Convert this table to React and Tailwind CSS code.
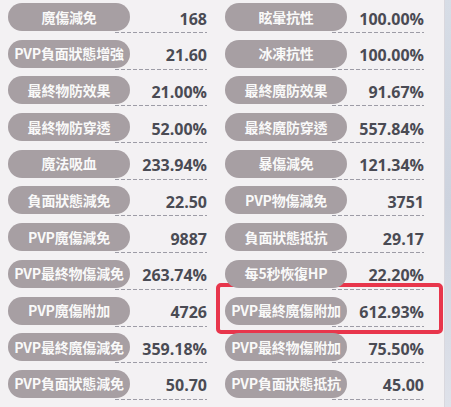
const rows = [
  ["魔傷減免", "168", "眩暈抗性", "100.00%"],
  ["PVP負面狀態增強", "21.60", "冰凍抗性", "100.00%"],
  ["最終物防效果", "21.00%", "最終魔防效果", "91.67%"],
  ["最終物防穿透", "52.00%", "最終魔防穿透", "557.84%"],
  ["魔法吸血", "233.94%", "暴傷減免", "121.34%"],
  ["負面狀態減免", "22.50", "PVP物傷減免", "3751"],
  ["PVP魔傷減免", "9887", "負面狀態抵抗", "29.17"],
  ["PVP最終物傷減免", "263.74%", "每5秒恢復HP", "22.20%"],
  ["PVP魔傷附加", "4726", "PVP最終魔傷附加", "612.93%"],
  ["PVP最終魔傷減免", "359.18%", "PVP最終物傷附加", "75.50%"],
  ["PVP負面狀態減免", "50.70", "PVP負面狀態抵抗", "45.00"],
];

const StatCell = ({ label, value, highlight }) => {
  return (
    <div className="relative h-[36.7px] pl-[8px] flex items-start">
      {highlight && (
        <div className="absolute left-[-1px] right-[1px] top-[-14px] bottom-[-1px] border-[4px] border-[#e8364c] rounded-[5px]" />
      )}
      <div className="relative z-10 w-[122px] h-[28px] rounded-full bg-[#a79fa3] flex items-center justify-center text-[14px] font-bold text-white/95 tracking-[-0.2px] whitespace-nowrap">
        {label}
      </div>
      <div className="ml-[-15px] w-[92px] h-[30px] flex flex-col">
        <div className="flex-1 flex items-center justify-end pt-[2px] text-[16px] font-bold text-[#4a4b54] font-['Open_Sans',sans-serif]">
          {value}
        </div>
        <div className="h-[1px] bg-[repeating-linear-gradient(90deg,#9d9ca6_0_4px,transparent_4px_6px)]" />
      </div>
    </div>
  );
};

const App = () => {
  return (
    <div className="w-[451px] h-[407px] overflow-hidden flex font-['Noto_Sans_CJK_TC','Noto_Sans',sans-serif]">
      <div className="w-[444px] h-full bg-[#f3f1f3] pt-[3px] grid grid-cols-[217px_227px] content-start">
        {rows.map((r, i) => [
          <StatCell key={i + "a"} label={r[0]} value={r[1]} />,
          <StatCell key={i + "b"} label={r[2]} value={r[3]} highlight={i === 8} />,
        ])}
      </div>
      <div className="w-[1px] h-full bg-[#d9d8de]" />
      <div className="flex-1 h-full bg-gradient-to-b from-[#d7dde6] via-[#cdd3de] to-[#dfe2ea]" />
    </div>
  );
};

export default App;
